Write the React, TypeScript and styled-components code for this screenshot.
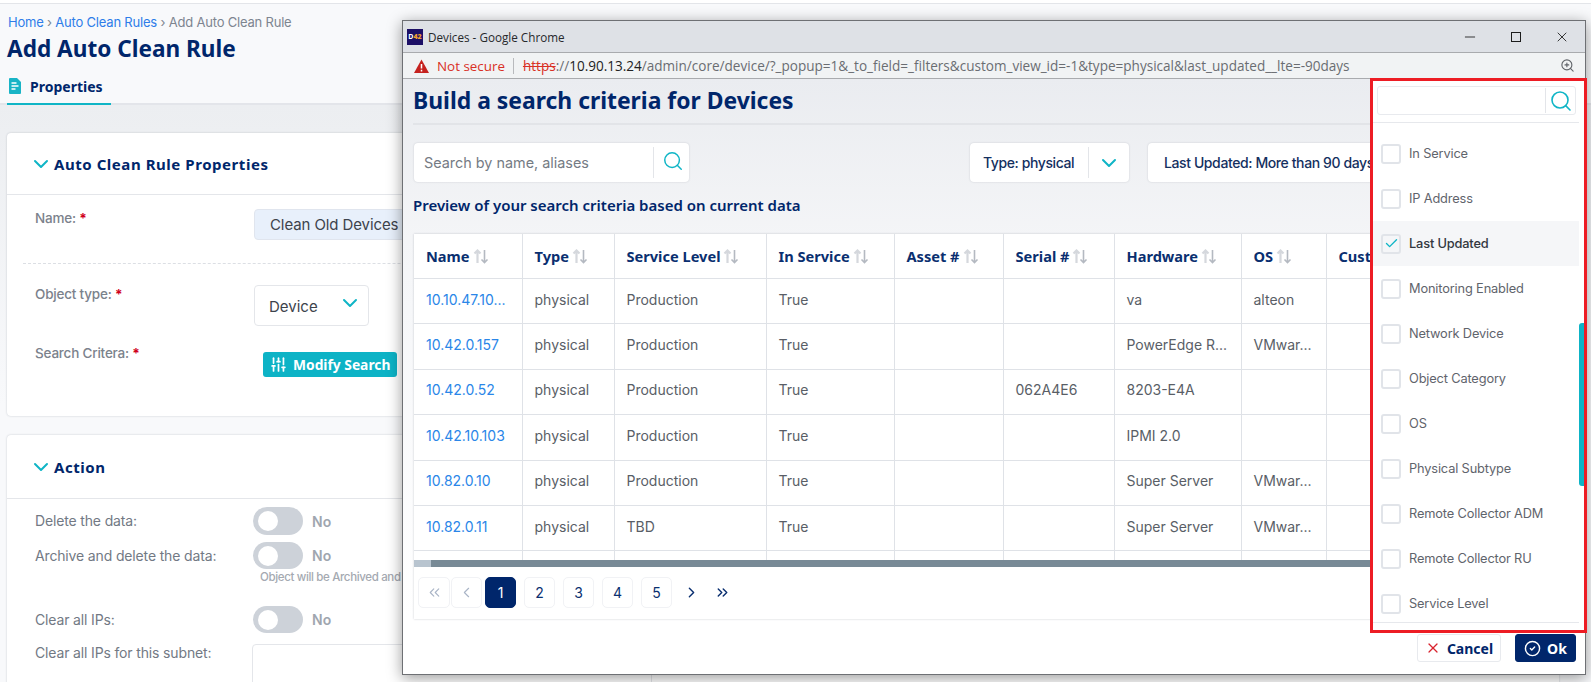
import styled, { createGlobalStyle } from "styled-components";
import {
  Check,
  ChevronDown,
  ChevronLeft,
  ChevronRight,
  ChevronsLeft,
  ChevronsRight,
  CircleCheck,
  Minus,
  Search,
  SlidersVertical,
  X,
  ZoomIn,
} from "lucide-react";

const NAVY = "#00266b";
const TEAL = "#0fb5c6";
const HEAD_FONT = `"Noto Sans", "Open Sans", sans-serif`;
const BODY_FONT = `Inter, "Open Sans", sans-serif`;
const CHROME_FONT = `"Open Sans", "Noto Sans", sans-serif`;

const GlobalStyle = createGlobalStyle`
  html, body {
    margin: 0;
    padding: 0;
    background: #fff;
    font-family: ${BODY_FONT};
  }
`;

const Screen = styled.div`
  position: relative;
  width: 1591px;
  height: 682px;
  overflow: hidden;
  background: #fff;
`;

const TopLine = styled.div`
  height: 3px;
  border-bottom: 1px solid #e3e5e9;
`;

const PageHeader = styled.header`
  height: 99px;
  padding: 0 7px;
  background: #f8f9fb;
  border-bottom: 2px solid #e3e5ea;
  box-sizing: content-box;
  display: flex;
  flex-direction: column;
`;

const Breadcrumb = styled.div`
  margin: 9px 0 0 1px;
  height: 18px;
  line-height: 18px;
  font-size: 13px;
  letter-spacing: -0.2px;
  color: #7d8590;
  a {
    color: #2e7de9;
  }
`;

const PageTitle = styled.h1`
  margin: 1px 0 0;
  height: 34px;
  line-height: 34px;
  font-family: ${HEAD_FONT};
  font-size: 22.6px;
  font-weight: 700;
  color: ${NAVY};
`;

const Tab = styled.div`
  margin-top: auto;
  margin-bottom: -2px;
  width: 104px;
  height: 35px;
  box-sizing: border-box;
  padding: 0 0 1px 2px;
  display: flex;
  align-items: center;
  gap: 9px;
  border-bottom: 2px solid ${TEAL};
  font-family: ${HEAD_FONT};
  font-size: 14px;
  font-weight: 700;
  color: ${NAVY};
`;

const Main = styled.main`
  height: 578px;
  padding: 28px 32px 0 7px;
  box-sizing: border-box;
  background: linear-gradient(#eceef1, #f8f9fb 300px);
  display: flex;
  flex-direction: column;
  gap: 19px;
`;

const Card = styled.section<{ $height: number }>`
  height: ${(p) => p.$height}px;
  flex-shrink: 0;
  box-sizing: border-box;
  background: #fff;
  border-radius: 4px;
  box-shadow: 0 0 2px rgba(40, 50, 70, 0.25);
`;

const CardHeader = styled.div<{ $height: number }>`
  height: ${(p) => p.$height}px;
  box-sizing: border-box;
  padding-left: 28px;
  display: flex;
  align-items: center;
  gap: 5px;
  border-bottom: 1px solid #e4e6ea;
  font-family: ${HEAD_FONT};
  font-size: 15px;
  font-weight: 700;
  letter-spacing: 0.55px;
  color: ${NAVY};
  svg {
    margin: 0 -4px 0 -6px;
    color: ${TEAL};
  }
`;

const Form = styled.div<{ $top: number }>`
  padding: ${(p) => p.$top}px 0 0 28px;
`;

const FormRow = styled.div<{ $height: number; $top?: number; $center?: boolean }>`
  display: grid;
  grid-template-columns: 218px 1fr;
  align-items: ${(p) => (p.$center ? "center" : "start")};
  height: ${(p) => p.$height}px;
  margin-top: ${(p) => p.$top ?? 0}px;
`;

const Label = styled.label<{ $strong?: boolean }>`
  line-height: 18px;
  font-size: ${(p) => (p.$strong ? "13.5px" : "14px")};
  letter-spacing: ${(p) => (p.$strong ? "-0.2px" : "-0.15px")};
  font-weight: ${(p) => (p.$strong ? 500 : 400)};
  color: ${(p) => (p.$strong ? "#7b828c" : "#727984")};
  em {
    font-style: normal;
    font-weight: 700;
    color: #d0021b;
  }
`;

const NameField = styled.div`
  margin-left: 1px;
  height: 31px;
  box-sizing: border-box;
  padding-left: 15px;
  display: flex;
  align-items: center;
  background: #e8f0fb;
  border: 1px solid #e0e5ee;
  border-radius: 4px;
  font-size: 15px;
  letter-spacing: -0.1px;
  color: #3d434c;
`;

const DashedRule = styled.hr`
  margin: 23px 0 0 -12px;
  border: 0;
  border-top: 1px dashed #dcdfe4;
`;

const SelectField = styled.div`
  margin-left: 1px;
  width: 115px;
  height: 41px;
  box-sizing: border-box;
  padding: 1px 6px 0 14px;
  display: flex;
  align-items: center;
  justify-content: space-between;
  border: 1px solid #e4e6ea;
  border-radius: 4px;
  font-size: 15px;
  color: #3d434c;
  svg {
    color: ${TEAL};
    margin-bottom: 6px;
  }
`;

const ModifyButton = styled.button`
  margin: 8px 0 0 10px;
  width: 134px;
  height: 25px;
  padding: 0 0 0 7px;
  display: flex;
  align-items: center;
  gap: 6px;
  border: 0;
  border-radius: 3px;
  background: #0db3c6;
  font-family: ${HEAD_FONT};
  font-size: 13.8px;
  font-weight: 700;
  color: #fff;
`;

const SwitchCell = styled.div`
  height: 100%;
  display: flex;
  align-items: center;
  gap: 9px;
  font-size: 14px;
  font-weight: 600;
  color: #a0a6af;
`;

const SwitchTrack = styled.span`
  width: 50px;
  height: 100%;
  border-radius: 14px;
  background: #cdd2d9;
  display: flex;
  align-items: center;
  padding-left: 5px;
  box-sizing: border-box;
  &::after {
    content: "";
    width: 20px;
    height: 20px;
    border-radius: 50%;
    background: #fff;
  }
`;

const SwitchHint = styled.div`
  margin: 1px 0 0 225px;
  height: 14px;
  line-height: 14px;
  white-space: nowrap;
  font-size: 11.5px;
  font-weight: 500;
  letter-spacing: -0.35px;
  color: #a4a9b1;
`;

const SubnetInput = styled.div`
  margin-left: -1px;
  width: 398px;
  height: 60px;
  border: 1px solid #e4e6ea;
  border-radius: 4px;
`;

// popup browser window sits on top of the page
const ChromeWindow = styled.div`
  position: absolute;
  left: 402px;
  top: 20px;
  width: 1184px;
  height: 655px;
  box-sizing: border-box;
  border: 1px solid #6e7074;
  background: #fff;
  box-shadow: 0 3px 14px rgba(0, 0, 0, 0.4);
  display: flex;
  flex-direction: column;
`;

const TitleBar = styled.div`
  height: 31px;
  flex-shrink: 0;
  box-sizing: border-box;
  padding: 0 15px 0 4px;
  display: flex;
  align-items: center;
  background: #dee1e6;
  font-family: ${CHROME_FONT};
  font-size: 11.7px;
  color: #26282b;
`;

const Favicon = styled.span`
  width: 16px;
  height: 16px;
  margin-right: 5px;
  background: #1c0f66;
  color: #fff;
  font-family: ${HEAD_FONT};
  font-size: 7px;
  font-weight: 700;
  line-height: 16px;
  text-align: center;
  b {
    color: #f0a030;
  }
`;

const WindowButtons = styled.div`
  margin-left: auto;
  display: flex;
  gap: 30px;
  svg {
    display: block;
    color: #1c1c1c;
  }
`;

const UrlBar = styled.div`
  height: 27px;
  flex-shrink: 0;
  box-sizing: border-box;
  padding: 0 10px 0 11px;
  display: flex;
  align-items: center;
  background: #f1f3f4;
  border-top: 1px solid #a9abae;
  border-bottom: 1px solid #a9abae;
  font-family: ${CHROME_FONT};
  font-size: 13.55px;
  color: #6a6d72;
  white-space: nowrap;
`;

const NotSecure = styled.span`
  margin-left: 8px;
  padding-right: 8px;
  color: #d93025;
  font-size: 13.4px;
  border-right: 1px solid #b8babd;
  line-height: 16px;
`;

const UrlText = styled.span`
  margin-left: 9px;
  s {
    color: #d93025;
  }
  b {
    font-weight: 400;
    color: #222;
  }
`;

const UrlZoom = styled.span`
  margin-left: auto;
  display: flex;
  color: #5f6368;
`;

const WindowBody = styled.div`
  flex: 1;
  min-height: 0;
  padding: 0 9px 0 11px;
  background: linear-gradient(#eaecf0, #f4f5f7 160px, #f6f7f9 230px, #fff 540px);
  display: flex;
  flex-direction: column;
`;

const DialogTitle = styled.h2`
  margin: 0 0 0 -1px;
  height: 46px;
  flex-shrink: 0;
  box-sizing: border-box;
  border-bottom: 2px solid #e2e4e8;
  line-height: 44px;
  font-family: ${HEAD_FONT};
  font-size: 22.9px;
  font-weight: 700;
  color: ${NAVY};
`;

const FilterRow = styled.div`
  margin-top: 18px;
  display: flex;
  align-items: flex-start;
  white-space: nowrap;
`;

const SearchBox = styled.div`
  width: 275px;
  height: 39px;
  box-sizing: border-box;
  background: #fff;
  border-radius: 4px;
  box-shadow: 0 0 2px rgba(40, 50, 70, 0.2);
  display: flex;
  align-items: center;
  padding-left: 10px;
  font-size: 14.4px;
  color: #757b84;
  svg {
    margin: 0 5px 3px 0;
    color: ${TEAL};
  }
`;

const SearchDivider = styled.span`
  margin-left: auto;
  width: 1px;
  height: 31px;
  margin-right: 8px;
  background: #e3e5e9;
`;

const FilterChip = styled.div<{ $width: number; $left: number; $pad: number }>`
  width: ${(p) => p.$width}px;
  margin-left: ${(p) => p.$left}px;
  height: 39px;
  flex-shrink: 0;
  box-sizing: border-box;
  padding-left: ${(p) => p.$pad}px;
  background: #fff;
  border-radius: 4px;
  box-shadow: 0 0 2px rgba(40, 50, 70, 0.2);
  display: flex;
  align-items: center;
  font-size: 14px;
  font-weight: 500;
  letter-spacing: -0.4px;
  color: #14305f;
`;

const ChipArrow = styled.span`
  margin-left: auto;
  width: 40px;
  height: 31px;
  display: flex;
  align-items: center;
  justify-content: center;
  border-left: 1px solid #e3e5e9;
  color: ${TEAL};
`;

const PreviewLabel = styled.div`
  margin: 12px 0 0 -1px;
  height: 22px;
  line-height: 22px;
  font-family: ${HEAD_FONT};
  font-size: 15px;
  font-weight: 600;
  color: ${NAVY};
`;

const TablePanel = styled.div`
  margin-top: 18px;
  height: 385px;
  flex-shrink: 0;
  background: #fff;
  box-shadow: 0 0 2px rgba(40, 50, 70, 0.25);
  display: flex;
  flex-direction: column;
`;

const TableClip = styled.div`
  height: 326px;
  flex-shrink: 0;
  overflow: hidden;
`;

const Table = styled.table`
  width: 1125px;
  table-layout: fixed;
  border-collapse: collapse;
  th,
  td {
    border: 1px solid #dfe2e7;
    padding: 0 0 0 12px;
    text-align: left;
    white-space: nowrap;
    overflow: hidden;
  }
  th:first-child,
  td:first-child {
    border-left: 0;
  }
  tr:first-child th {
    border-top: 0;
  }
  th {
    height: 44px;
    font-family: ${HEAD_FONT};
    font-size: 14.6px;
    font-weight: 700;
    color: #0a2f70;
  }
  td {
    height: 45.4px;
    box-sizing: border-box;
    padding-bottom: 4px;
    font-size: 14px;
    color: #595e66;
  }
  td a {
    color: #2a86e8;
  }
`;

const SortIcon = styled.svg`
  margin-left: 3px;
  vertical-align: -2px;
`;

const HScroll = styled.div`
  height: 7px;
  flex-shrink: 0;
  background: #788a96;
  &::before {
    content: "";
    display: block;
    width: 17px;
    height: 100%;
    background: #b8c4cf;
  }
`;

const Pager = styled.nav`
  flex: 1;
  padding: 10px 0 0 4px;
  display: flex;
  align-items: flex-start;
`;

const PageButton = styled.span<{
  $active?: boolean;
  $muted?: boolean;
  $plain?: boolean;
  $wide?: boolean;
  $gap?: number;
}>`
  width: ${(p) => (p.$plain ? "22px" : p.$wide ? "32px" : "31px")};
  height: 31px;
  margin-right: ${(p) => p.$gap ?? 8}px;
  box-sizing: border-box;
  display: flex;
  align-items: center;
  justify-content: center;
  border-radius: 5px;
  border: 1px solid ${(p) => (p.$active ? NAVY : p.$plain ? "transparent" : "#f1f2f5")};
  background: ${(p) => (p.$active ? NAVY : "#fff")};
  color: ${(p) => (p.$active ? "#fff" : p.$muted ? "#a9b4c6" : "#0a2f70")};
  font-size: 14px;
`;

const Footer = styled.div`
  margin-top: 15px;
  display: flex;
  justify-content: flex-end;
  gap: 14px;
`;

const FooterButton = styled.button<{ $primary?: boolean }>`
  width: ${(p) => (p.$primary ? "61px" : "84px")};
  height: 28px;
  padding: 0;
  display: flex;
  align-items: center;
  justify-content: center;
  gap: 6px;
  border-radius: 3px;
  border: 1px solid ${(p) => (p.$primary ? NAVY : "#e8eaee")};
  background: ${(p) => (p.$primary ? NAVY : "#fff")};
  color: ${(p) => (p.$primary ? "#fff" : NAVY)};
  font-family: ${HEAD_FONT};
  font-size: 14px;
  font-weight: 700;
  svg {
    color: ${(p) => (p.$primary ? "#fff" : "#d9232e")};
  }
`;

// column picker, outlined in red in the picture
const Picker = styled.div`
  position: absolute;
  left: 967px;
  top: 57px;
  width: 217px;
  height: 555px;
  box-sizing: border-box;
  border: 3px solid #ed1c24;
  background: #fff;
  display: flex;
  flex-direction: column;
`;

const PickerSearch = styled.div`
  margin: 5px 8px 0 4px;
  height: 29px;
  flex-shrink: 0;
  box-sizing: border-box;
  border: 1px solid #e8eaee;
  border-radius: 3px;
  display: flex;
  align-items: center;
  justify-content: flex-end;
  padding-right: 2px;
  svg {
    color: ${TEAL};
  }
`;

const PickerDivider = styled.span`
  width: 1px;
  height: 25px;
  margin-right: 3px;
  background: #e3e5e9;
`;

const PickerList = styled.div`
  margin-top: 7px;
  margin-right: 5px;
  height: 501px;
  box-sizing: border-box;
  padding-top: 8px;
  border-top: 1px solid #e6e8ec;
  border-bottom: 1px solid #e6e8ec;
  overflow: hidden;
`;

const PickerRow = styled.div<{ $checked?: boolean }>`
  height: 45px;
  padding-left: 8px;
  display: flex;
  align-items: center;
  gap: 8px;
  background: ${(p) => (p.$checked ? "#f5f6f8" : "#fff")};
  font-size: 12.8px;
  letter-spacing: -0.15px;
  font-weight: ${(p) => (p.$checked ? 500 : 400)};
  color: ${(p) => (p.$checked ? "#33383f" : "#5f646c")};
`;

const CheckBox = styled.span`
  width: 20px;
  height: 20px;
  flex-shrink: 0;
  box-sizing: border-box;
  border: 2px solid #e1e4e9;
  border-radius: 3px;
  display: flex;
  align-items: center;
  justify-content: center;
  color: ${TEAL};
`;

const ScrollThumb = styled.div`
  position: absolute;
  left: 206px;
  top: 242px;
  width: 5px;
  height: 163px;
  border-radius: 3px 0 0 3px;
  background: #0db3c6;
`;

const COLUMNS = [
  { name: "Name", width: 108 },
  { name: "Type", width: 92 },
  { name: "Service Level", width: 152 },
  { name: "In Service", width: 128 },
  { name: "Asset #", width: 109 },
  { name: "Serial #", width: 111 },
  { name: "Hardware", width: 127 },
  { name: "OS", width: 85 },
  { name: "Custom", width: 213 },
];

const ROWS = [
  ["10.10.47.10...", "physical", "Production", "True", "", "", "va", "alteon", ""],
  ["10.42.0.157", "physical", "Production", "True", "", "", "PowerEdge R...", "VMwar...", ""],
  ["10.42.0.52", "physical", "Production", "True", "", "062A4E6", "8203-E4A", "", ""],
  ["10.42.10.103", "physical", "Production", "True", "", "", "IPMI 2.0", "", ""],
  ["10.82.0.10", "physical", "Production", "True", "", "", "Super Server", "VMwar...", ""],
  ["10.82.0.11", "physical", "TBD", "True", "", "", "Super Server", "VMwar...", ""],
  ["", "", "", "", "", "", "", "", ""],
];

const PICKER_ITEMS = [
  "In Service",
  "IP Address",
  "Last Updated",
  "Monitoring Enabled",
  "Network Device",
  "Object Category",
  "OS",
  "Physical Subtype",
  "Remote Collector ADM",
  "Remote Collector RU",
  "Service Level",
];

function SortArrows() {
  return (
    <SortIcon width="16" height="15" viewBox="0 0 16 15" fill="none" strokeWidth="1.6">
      <path d="M4.5 14V1.5M1.5 4.5l3-3 3 3" stroke="#d5d8dd" strokeWidth="2.2" />
      <path d="M11.5 1v12.5M8.5 10.5l3 3 3-3" stroke="#b4b9c1" />
    </SortIcon>
  );
}

function DocIcon() {
  return (
    <svg width="12" height="16" viewBox="0 0 12 16">
      <path d="M1 0h7l4 4v11a1 1 0 0 1-1 1H1a1 1 0 0 1-1-1V1a1 1 0 0 1 1-1z" fill="#19b4c6" />
      <path d="M2.5 5h5M2.5 8h7M2.5 11h4" stroke="#fff" strokeWidth="1.4" />
    </svg>
  );
}

function WarnIcon() {
  return (
    <svg width="15" height="14" viewBox="0 0 15 14">
      <path d="M7.5 0.5L15 14H0z" fill="#c5221f" />
      <path d="M7.5 5v4.5M7.5 10.8v1.6" stroke="#fff" strokeWidth="1.5" />
    </svg>
  );
}

function MaximizeIcon() {
  return (
    <svg width="16" height="16" viewBox="0 0 16 16" fill="none">
      <rect x="3.5" y="3.5" width="9" height="9" stroke="currentColor" />
    </svg>
  );
}

function App() {
  return (
    <Screen>
      <GlobalStyle />
      <TopLine />
      <PageHeader>
        <Breadcrumb>
          <a>Home</a> › <a>Auto Clean Rules</a> › Add Auto Clean Rule
        </Breadcrumb>
        <PageTitle>Add Auto Clean Rule</PageTitle>
        <Tab>
          <DocIcon />
          Properties
        </Tab>
      </PageHeader>
      <Main>
        <Card $height={283}>
          <CardHeader $height={62}>
            <ChevronDown size={24} strokeWidth={2} />
            Auto Clean Rule Properties
          </CardHeader>
          <Form $top={14}>
            <FormRow $height={31}>
              <Label $strong>
                Name: <em>*</em>
              </Label>
              <NameField>Clean Old Devices</NameField>
            </FormRow>
            <DashedRule />
            <FormRow $height={41} $top={21}>
              <Label $strong>
                Object type: <em>*</em>
              </Label>
              <SelectField>
                Device
                <ChevronDown size={24} strokeWidth={2} />
              </SelectField>
            </FormRow>
            <FormRow $height={33} $top={18}>
              <Label $strong>
                Search Critera: <em>*</em>
              </Label>
              <ModifyButton>
                <SlidersVertical size={17} strokeWidth={2.4} />
                Modify Search
              </ModifyButton>
            </FormRow>
          </Form>
        </Card>
        <Card $height={260}>
          <CardHeader $height={64}>
            <ChevronDown size={24} strokeWidth={2} />
            Action
          </CardHeader>
          <Form $top={8}>
            <FormRow $height={28} $center>
              <Label>Delete the data:</Label>
              <SwitchCell>
                <SwitchTrack />
                No
              </SwitchCell>
            </FormRow>
            <FormRow $height={27} $top={7} $center>
              <Label>Archive and delete the data:</Label>
              <SwitchCell>
                <SwitchTrack />
                No
              </SwitchCell>
            </FormRow>
            <SwitchHint>Object will be Archived and then deleted</SwitchHint>
            <FormRow $height={27} $top={22} $center>
              <Label>Clear all IPs:</Label>
              <SwitchCell>
                <SwitchTrack />
                No
              </SwitchCell>
            </FormRow>
            <FormRow $height={60} $top={11}>
              <Label>Clear all IPs for this subnet:</Label>
              <SubnetInput />
            </FormRow>
          </Form>
        </Card>
      </Main>

      <ChromeWindow>
        <TitleBar>
          <Favicon>
            D<b>42</b>
          </Favicon>
          Devices - Google Chrome
          <WindowButtons>
            <Minus size={16} strokeWidth={1.3} />
            <MaximizeIcon />
            <X size={16} strokeWidth={1.3} />
          </WindowButtons>
        </TitleBar>
        <UrlBar>
          <WarnIcon />
          <NotSecure>Not secure</NotSecure>
          <UrlText>
            <s>https</s>://<b>10.90.13.24</b>
            /admin/core/device/?_popup=1&amp;_to_field=_filters&amp;custom_view_id=-1&amp;type=physical&amp;last_updated__lte=-90days
          </UrlText>
          <UrlZoom>
            <ZoomIn size={15} strokeWidth={1.8} />
          </UrlZoom>
        </UrlBar>
        <WindowBody>
          <DialogTitle>Build a search criteria for Devices</DialogTitle>
          <FilterRow>
            <SearchBox>
              Search by name, aliases
              <SearchDivider />
              <Search size={22} strokeWidth={1.6} />
            </SearchBox>
            <FilterChip $width={159} $left={281} $pad={13}>
              Type: physical
              <ChipArrow>
                <ChevronDown size={24} strokeWidth={2} />
              </ChipArrow>
            </FilterChip>
            <FilterChip $width={300} $left={19} $pad={16}>
              Last Updated: More than 90 days
            </FilterChip>
          </FilterRow>
          <PreviewLabel>Preview of your search criteria based on current data</PreviewLabel>
          <TablePanel>
            <TableClip>
              <Table>
                <colgroup>
                  {COLUMNS.map((col) => (
                    <col key={col.name} style={{ width: col.width }} />
                  ))}
                </colgroup>
                <thead>
                  <tr>
                    {COLUMNS.map((col) => (
                      <th key={col.name}>
                        {col.name}
                        <SortArrows />
                      </th>
                    ))}
                  </tr>
                </thead>
                <tbody>
                  {ROWS.map((row, i) => (
                    <tr key={i}>
                      {row.map((cell, j) => (
                        <td key={j}>{j === 0 ? <a>{cell}</a> : cell}</td>
                      ))}
                    </tr>
                  ))}
                </tbody>
              </Table>
            </TableClip>
            <HScroll />
            <Pager>
              <PageButton $muted $wide $gap={1}>
                <ChevronsLeft size={17} strokeWidth={1.6} />
              </PageButton>
              <PageButton $muted $gap={3}>
                <ChevronLeft size={17} strokeWidth={1.6} />
              </PageButton>
              <PageButton $active>1</PageButton>
              <PageButton>2</PageButton>
              <PageButton>3</PageButton>
              <PageButton>4</PageButton>
              <PageButton>5</PageButton>
              <PageButton $plain $gap={9}>
                <ChevronRight size={17} strokeWidth={2} />
              </PageButton>
              <PageButton $plain>
                <ChevronsRight size={17} strokeWidth={2} />
              </PageButton>
            </Pager>
          </TablePanel>
          <Footer>
            <FooterButton>
              <X size={16} strokeWidth={1.8} />
              Cancel
            </FooterButton>
            <FooterButton $primary>
              <CircleCheck size={17} strokeWidth={2} />
              Ok
            </FooterButton>
          </Footer>
        </WindowBody>
        <Picker>
          <PickerSearch>
            <PickerDivider />
            <Search size={24} strokeWidth={1.6} />
          </PickerSearch>
          <PickerList>
            {PICKER_ITEMS.map((item) => {
              const checked = item === "Last Updated";
              return (
                <PickerRow key={item} $checked={checked}>
                  <CheckBox>{checked && <Check size={15} strokeWidth={2.2} />}</CheckBox>
                  {item}
                </PickerRow>
              );
            })}
          </PickerList>
          <ScrollThumb />
        </Picker>
      </ChromeWindow>
    </Screen>
  );
}

export default App;
